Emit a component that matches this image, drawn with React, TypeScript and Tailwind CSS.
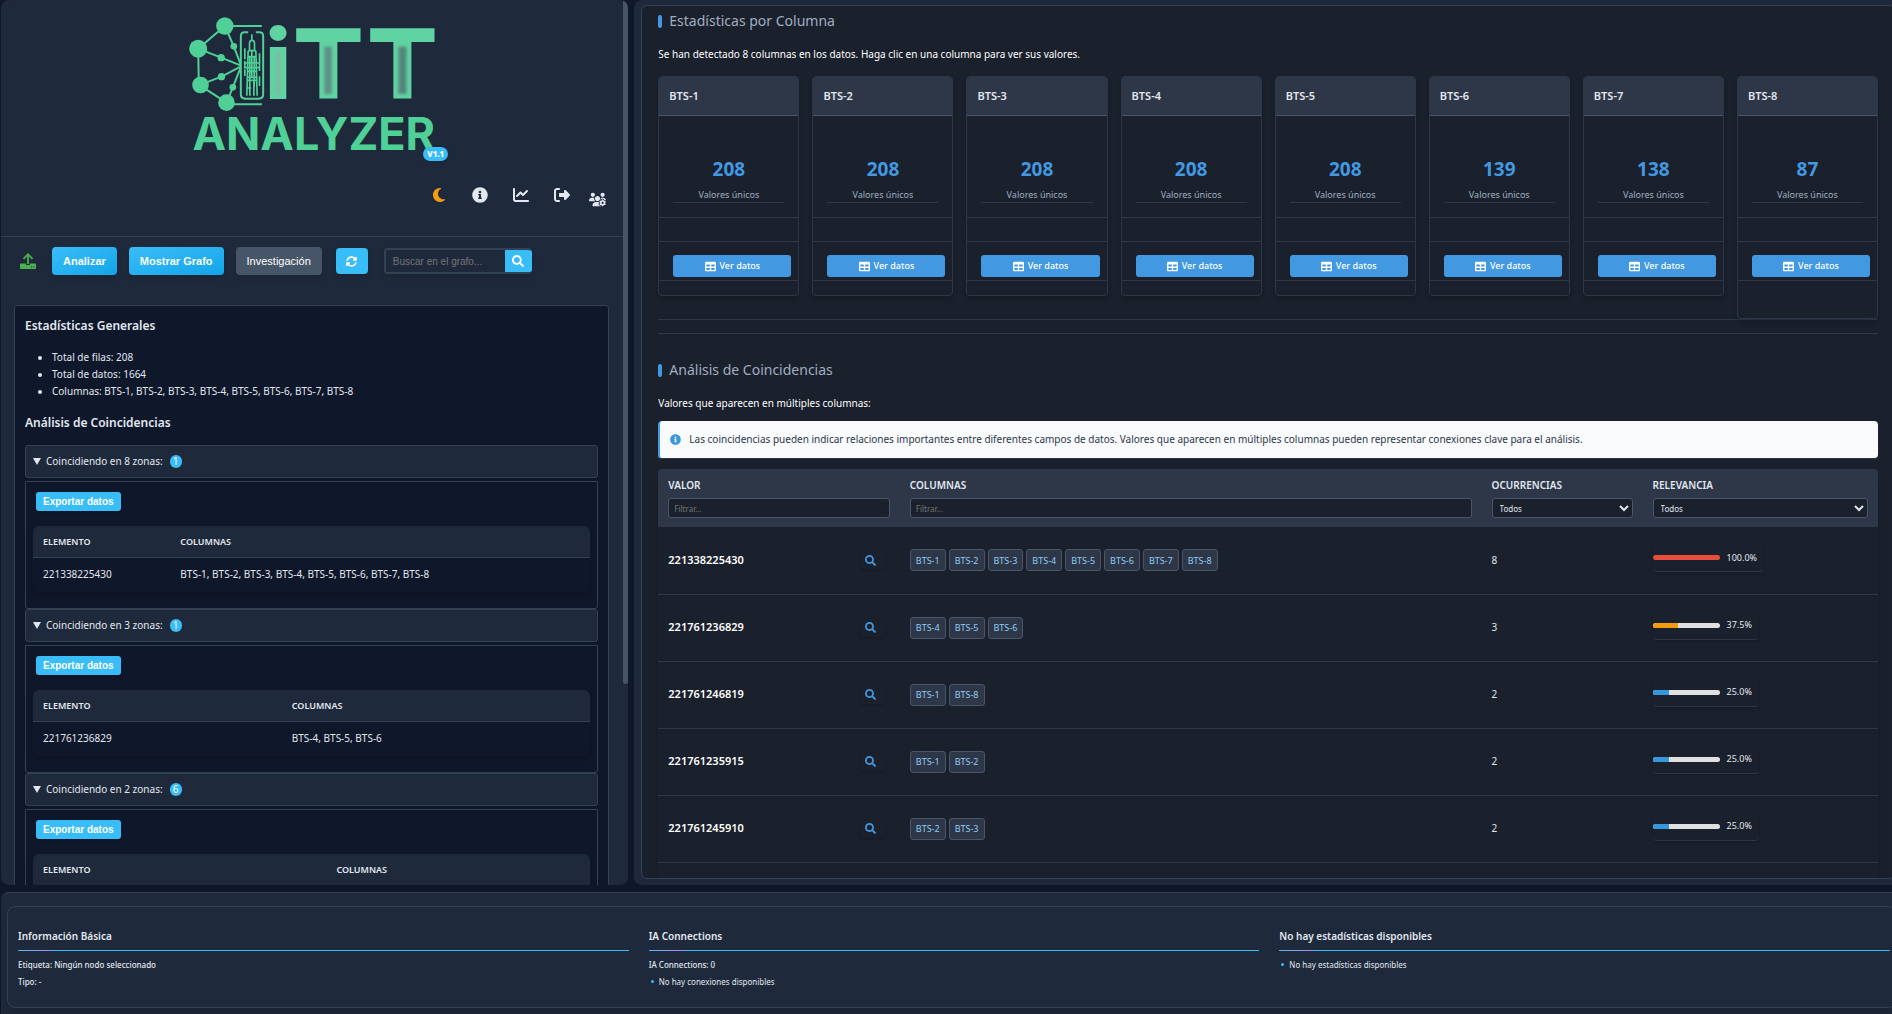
import type { ReactNode } from "react";
import { FaInfoCircle, FaSearch, FaSyncAlt } from "react-icons/fa";
import { FaChartLine, FaMoon, FaRightFromBracket, FaTable, FaUsersGear } from "react-icons/fa6";

const GREEN = "#4fd096";

const columnStats = [
  { name: "BTS-1", unique: 208 },
  { name: "BTS-2", unique: 208 },
  { name: "BTS-3", unique: 208 },
  { name: "BTS-4", unique: 208 },
  { name: "BTS-5", unique: 208 },
  { name: "BTS-6", unique: 139 },
  { name: "BTS-7", unique: 138 },
  { name: "BTS-8", unique: 87 },
];

const zoneGroups = [
  {
    zones: 8,
    count: 1,
    firstCol: "w-[25%]",
    rows: [["221338225430", "BTS-1, BTS-2, BTS-3, BTS-4, BTS-5, BTS-6, BTS-7, BTS-8"]],
  },
  { zones: 3, count: 1, firstCol: "w-[45%]", rows: [["221761236829", "BTS-4, BTS-5, BTS-6"]] },
  {
    zones: 2,
    count: 6,
    firstCol: "w-[53%]",
    rows: [
      ["221761246819", "BTS-1, BTS-8"],
      ["221761235915", "BTS-1, BTS-2"],
      ["221761245910", "BTS-2, BTS-3"],
    ],
  },
];

const matches = [
  {
    value: "221338225430",
    tags: ["BTS-1", "BTS-2", "BTS-3", "BTS-4", "BTS-5", "BTS-6", "BTS-7", "BTS-8"],
    count: 8,
    percent: 100,
    color: "bg-[#e74c3c]",
  },
  { value: "221761236829", tags: ["BTS-4", "BTS-5", "BTS-6"], count: 3, percent: 37.5, color: "bg-[#f39c12]" },
  { value: "221761246819", tags: ["BTS-1", "BTS-8"], count: 2, percent: 25, color: "bg-[#3498db]" },
  { value: "221761235915", tags: ["BTS-1", "BTS-2"], count: 2, percent: 25, color: "bg-[#3498db]" },
  { value: "221761245910", tags: ["BTS-2", "BTS-3"], count: 2, percent: 25, color: "bg-[#3498db]" },
];

function Logo() {
  return (
    <svg viewBox="55 45 755 405" className="h-[135px] w-[252px] overflow-visible" role="img" aria-label="iTT Analyzer">
      <defs>
        <filter id="soft" x="-50%" y="-20%" width="200%" height="140%">
          <feGaussianBlur stdDeviation="4" />
        </filter>
      </defs>
      <g stroke={GREEN} strokeWidth="6" fill="none">
        <path d="M165 78H276M170 313H276M165 78L85 146V146L87 254L170 308M85 146L154 173L212 196M92 254L155 230L212 200M165 78L192 139L212 192M170 308L189 262L212 204" />
        <path d="M235 97H224Q213 97 213 110V283Q213 296 226 296H267Q280 296 280 283V110Q280 97 269 97H258" />
      </g>
      <g fill={GREEN}>
        <circle cx="165" cy="78" r="26" />
        <circle cx="85" cy="146" r="27" />
        <circle cx="92" cy="255" r="25" />
        <circle cx="170" cy="308" r="25" />
        <circle cx="192" cy="139" r="10" />
        <circle cx="154" cy="173" r="11" />
        <circle cx="155" cy="230" r="11" />
        <circle cx="189" cy="262" r="10" />
      </g>
      <g stroke={GREEN} strokeWidth="5" fill="none">
        <path d="M246 103V121M239 150V130Q239 121 246 121Q254 121 254 130V150M235 152H258M235 152L231 287M258 152L262 287M234 170H259M222 189H270M222 203H270M232 214H261M232 232H261M234 241H260M246 152V232M240 170V260M253 170V260M240 244V287M252 244V287M232 264H244M225 145V178M225 183V200M225 208V228M269 160V213M269 229V258" />
      </g>
      <g fill="#5fd3a2" fontWeight="700" textAnchor="middle">
        <text x="325" y="296" fontFamily="Inter, sans-serif" fontSize="288" fontWeight="800">
          i
        </text>
        <text x="476" y="296" fontFamily="DejaVu Sans, sans-serif" fontSize="287">
          T
        </text>
        <text x="698" y="296" fontFamily="DejaVu Sans, sans-serif" fontSize="287">
          T
        </text>
      </g>
      <g filter="url(#soft)">
        <rect x="318" y="152" width="14" height="132" fill="#7fb9a4" />
        <rect x="464" y="140" width="22" height="142" fill="#5f8f84" />
        <rect x="686" y="140" width="24" height="142" fill="#55857b" />
      </g>
      <text x="432" y="449" fill={GREEN} fontFamily="Inter, sans-serif" fontWeight="700" fontSize="135" textAnchor="middle">
        ANALYZER
      </text>
    </svg>
  );
}

function UploadIcon() {
  return (
    <svg viewBox="0 0 16 16" className="size-4" fill="#4caf50" aria-hidden="true">
      <path d="M8 0l5.2 5.2-1.3 1.3L8.900 3.600V11H7.100V3.600l-3 2.900-1.300-1.300z" />
      <path d="M1 10.600h5V12h4v-1.400h5a1 1 0 011 1V15a1 1 0 01-1 1H1a1 1 0 01-1-1v-3.400a1 1 0 011-1z" />
      <circle cx="11.500" cy="13.800" r=".6" fill="#1e293b" />
      <circle cx="13.700" cy="13.800" r=".6" fill="#1e293b" />
    </svg>
  );
}

function IconButton({ label, children }: { label: string; children: ReactNode }) {
  return (
    <button aria-label={label} className="flex w-[41px] justify-center text-base text-[#e2e8f0]">
      {children}
    </button>
  );
}

function ZoneGroup({ group }: { group: (typeof zoneGroups)[number] }) {
  return (
    <details open>
      <summary className="flex h-[33px] cursor-pointer list-none items-center rounded-[3px] border border-[#334155] bg-[#1e293b] px-[7px]">
        <svg viewBox="0 0 8 7" className="mr-[5px] h-[7px] w-2" fill="#e2e8f0" aria-hidden="true">
          <path d="M0 0h8L4 7z" />
        </svg>
        Coincidiendo en {group.zones} zonas:
        <span className="ml-[7px] flex h-[13px] w-3 items-center justify-center rounded-full bg-[#38bdf8] text-white">
          {group.count}
        </span>
      </summary>
      <div className="mt-[3px] rounded-b-[3px] border border-[#334155] px-[7px] pt-2.5 pb-4">
        <button className="ml-[3px] block h-[19px] rounded-[3px] bg-[#38bdf8] px-[7px] font-['Liberation_Sans',sans-serif] text-[10px] font-bold text-white shadow">
          Exportar datos
        </button>
        <table className="mt-[15px] w-full table-fixed overflow-hidden rounded-md text-left shadow-md">
          <thead className="bg-[#1e293b] text-[9px]">
            <tr className="h-[31px] border-b border-[#334155]">
              <th className={`${group.firstCol} pl-2.5 font-semibold`}>ELEMENTO</th>
              <th className="pl-2 font-semibold">COLUMNAS</th>
            </tr>
          </thead>
          <tbody>
            {group.rows.map(([value, columns]) => (
              <tr key={value} className="h-[35px]">
                <td className="pl-2.5">{value}</td>
                <td className="pl-2">{columns}</td>
              </tr>
            ))}
          </tbody>
        </table>
      </div>
    </details>
  );
}

function LeftPanel() {
  return (
    <aside className="relative w-[33%] overflow-hidden rounded-lg bg-[#1e293b] pr-[5px]">
      <header className="flex h-[237px] flex-col border-b border-[#334155] pt-[15px]">
        <div className="flex justify-center pl-1">
          <div className="relative">
            <Logo />
            <span className="absolute -right-2 -bottom-[11px] flex h-3.5 items-center rounded-full bg-[#38bdf8] px-1 text-[8px] font-extrabold text-white shadow">
              V1.1
            </span>
          </div>
        </div>
        <div className="mt-[37px] flex items-start justify-end pr-3">
          <button aria-label="Modo oscuro" className="flex w-[41px] justify-center text-base text-[#f39c12]">
            <FaMoon />
          </button>
          <IconButton label="Información">
            <FaInfoCircle />
          </IconButton>
          <IconButton label="Estadísticas">
            <FaChartLine />
          </IconButton>
          <IconButton label="Salir">
            <FaRightFromBracket />
          </IconButton>
          <button aria-label="Usuarios" className="ml-px flex w-7 justify-center pt-1 text-[17px] text-[#e2e8f0]">
            <FaUsersGear />
          </button>
        </div>
      </header>

      <div className="mt-2.5 flex items-center pl-[19px] font-['Liberation_Sans',sans-serif] text-[11px] font-bold text-white">
        <button aria-label="Cargar archivo">
          <UploadIcon />
        </button>
        <button className="ml-4 h-7 rounded bg-linear-to-br from-[#38bdf8] to-[#0ea5e9] px-[11px] shadow-md">Analizar</button>
        <button className="ml-3 h-7 rounded bg-linear-to-br from-[#38bdf8] to-[#0ea5e9] px-[11px] shadow-md">
          Mostrar Grafo
        </button>
        <button className="ml-3 h-7 rounded bg-[#475569] px-[11px] font-medium shadow-md">Investigación</button>
        <button
          aria-label="Actualizar"
          className="ml-3.5 flex h-[26px] w-8 items-center justify-center rounded bg-[#38bdf8] shadow-md"
        >
          <FaSyncAlt />
        </button>
        <form className="ml-4 flex h-[26px] w-[148px] overflow-hidden rounded border-2 border-r-0 border-[#334155] shadow-md">
          <input
            aria-label="Buscar en el grafo"
            placeholder="Buscar en el grafo..."
            className="min-w-0 flex-1 bg-[#1e293b] pl-[7px] text-[10px] font-normal text-[#e2e8f0] placeholder:text-[#757575]"
          />
          <button type="button" aria-label="Buscar" className="-my-px flex w-[27px] items-center justify-center bg-[#38bdf8] text-xs">
            <FaSearch />
          </button>
        </form>
      </div>

      <section className="mt-[30px] mr-3.5 ml-[13px] rounded-[3px] border border-[#334155] bg-[#0f172a] px-2.5 pt-3 pb-3">
        <h3 className="text-xs leading-4 font-semibold">Estadísticas Generales</h3>
        <ul className="mt-[15px] list-disc pl-[27px] leading-[17px]">
          <li>Total de filas: 208</li>
          <li>Total de datos: 1664</li>
          <li>Columnas: BTS-1, BTS-2, BTS-3, BTS-4, BTS-5, BTS-6, BTS-7, BTS-8</li>
        </ul>
        <h3 className="mt-[15px] mb-3.5 text-xs leading-4 font-semibold">Análisis de Coincidencias</h3>
        {zoneGroups.map((group) => (
          <ZoneGroup key={group.zones} group={group} />
        ))}
      </section>

      <div className="absolute top-0 right-0 h-[684px] w-[5px] rounded-b-full bg-[#475569]" />
    </aside>
  );
}

function SectionTitle({ children }: { children: ReactNode }) {
  return (
    <h2 className="flex items-center gap-[7px] text-sm leading-5 text-[#a0aec0]">
      <span className="h-[13px] w-1 rounded-sm bg-[#4299e1]" />
      {children}
    </h2>
  );
}

function ColumnCard({ name, unique, last }: { name: string; unique: number; last: boolean }) {
  return (
    <article
      className={`overflow-hidden rounded border border-[#2d3748] shadow-md ${last ? "pb-[37px]" : "pb-3.5"}`}
    >
      <h4 className="flex h-[39px] items-center border-b border-[#4a5568] bg-[#2d3748] px-2.5 text-[11px] font-semibold">{name}</h4>
      <div className="border-b border-[#2d3748] px-3.5 pt-10 pb-3.5">
        <div className="border-b border-[#2d3748] text-center">
          <div className="text-[19px] leading-[26px] font-bold text-[#4299e1]">{unique}</div>
          <div className="mt-1.5 text-[9px] leading-[14px] text-[#a0aec0]">Valores únicos</div>
        </div>
      </div>
      <div className="h-6 border-b border-[#2d3748]" />
      <div className="border-b border-[#2d3748] pt-[13px] pr-[7px] pb-[3px] pl-3.5">
        <button className="flex h-[22px] w-full items-center justify-center gap-1 rounded-[3px] bg-[#4299e1] text-[9px] font-medium text-white">
          <FaTable className="text-[11px]" />
          Ver datos
        </button>
      </div>
    </article>
  );
}

const fieldClass = "mt-1.5 block h-5 w-full rounded-[3px] border border-[#4a5568] bg-[#1a202c] text-[8px] font-normal";

function MatchTable() {
  return (
    <div className="mt-2.5 overflow-hidden rounded-t shadow-lg">
      <table className="w-full table-fixed text-left">
        <thead className="bg-[#2d3748] text-[10px] leading-[14px]">
          <tr>
            <th className="w-[19.8%] px-2.5 py-[9px] font-semibold">
              <label htmlFor="f-value">VALOR</label>
              <input id="f-value" placeholder="Filtrar..." className={`${fieldClass} px-[5px] placeholder:text-[#757575]`} />
            </th>
            <th className="w-[47.7%] px-2.5 py-[9px] font-semibold">
              <label htmlFor="f-columns">COLUMNAS</label>
              <input id="f-columns" placeholder="Filtrar..." className={`${fieldClass} px-[5px] placeholder:text-[#757575]`} />
            </th>
            <th className="w-[13.2%] px-2.5 py-[9px] font-semibold">
              <label htmlFor="f-count">OCURRENCIAS</label>
              <select id="f-count" className={`${fieldClass} px-[3px]`}>
                <option>Todos</option>
              </select>
            </th>
            <th className="px-2.5 py-[9px] font-semibold">
              <label htmlFor="f-relevance">RELEVANCIA</label>
              <select id="f-relevance" className={`${fieldClass} px-[3px]`}>
                <option>Todos</option>
              </select>
            </th>
          </tr>
        </thead>
        <tbody>
          {matches.map((m) => (
            <tr key={m.value} className="h-[67px] border-b border-[#2d3748]">
              <td className="px-2.5">
                <div className="flex items-center justify-between pr-[5px]">
                  <span className="text-[11px] font-semibold text-white">{m.value}</span>
                  <button
                    aria-label={`Buscar ${m.value}`}
                    className="flex h-[18px] w-[25px] items-center justify-center rounded-[3px] pr-1 text-[11px] text-[#4299e1] shadow"
                  >
                    <FaSearch />
                  </button>
                </div>
              </td>
              <td className="px-2.5">
                <div className="flex gap-[3px]">
                  {m.tags.map((tag) => (
                    <span
                      key={tag}
                      className="flex h-[22px] items-center rounded-[3px] border border-[#4a5568] bg-[#2d3748] px-[5px] text-[9px] text-[#90cdf4]"
                    >
                      {tag}
                    </span>
                  ))}
                </div>
              </td>
              <td className="px-2.5">{m.count}</td>
              <td className="px-2.5 pb-1">
                <div className="flex h-7 w-fit items-center gap-[7px] rounded border-b border-[#2d3748] pr-[7px] text-[9px] shadow">
                  <div className="h-[5px] w-[67px] overflow-hidden rounded-full bg-[#e0e0e0]">
                    <div className={`h-full ${m.color}`} style={{ width: `${m.percent}%` }} />
                  </div>
                  {m.percent.toFixed(1)}%
                </div>
              </td>
            </tr>
          ))}
        </tbody>
      </table>
      <div className="h-[67px]" />
    </div>
  );
}

function RightPanel() {
  return (
    <main className="flex min-w-0 flex-1 rounded-lg bg-[#1e293b] px-[7px] pt-[5px] pb-1.5">
      <div className="min-w-0 flex-1 overflow-hidden rounded-md border border-[#334155] bg-[#1a202c] px-4 pt-[5px]">
        <SectionTitle>Estadísticas por Columna</SectionTitle>
        <p className="mt-[15px] leading-4 text-white">
          Se han detectado 8 columnas en los datos. Haga clic en una columna para ver sus valores.
        </p>
        <div className="mt-3.5 grid grid-cols-8 items-start gap-[13px] border-b border-[#2d3748]">
          {columnStats.map((c, i) => (
            <ColumnCard key={c.name} name={c.name} unique={c.unique} last={i === columnStats.length - 1} />
          ))}
        </div>
        <hr className="mt-[13px] border-[#2d3748]" />
        <div className="mt-[26px]">
          <SectionTitle>Análisis de Coincidencias</SectionTitle>
        </div>
        <p className="mt-[15px] leading-4 text-white">Valores que aparecen en múltiples columnas:</p>
        <div className="mt-2.5 flex h-[38px] items-center gap-2 rounded border-b border-l-2 border-b-[#2d3748] border-l-[#4299e1] bg-[#f8fafc] pl-2.5 text-[#2d3748]">
          <FaInfoCircle className="text-[11px] text-[#3498db]" />
          Las coincidencias pueden indicar relaciones importantes entre diferentes campos de datos. Valores que aparecen en
          múltiples columnas pueden representar conexiones clave para el análisis.
        </div>
        <MatchTable />
      </div>
    </main>
  );
}

function InfoColumn({ title, children }: { title: string; children: ReactNode }) {
  return (
    <section>
      <h3 className="leading-4 font-semibold">{title}</h3>
      <div className="mt-1.5 mb-[5px] h-px bg-[#38bdf8]">
        <div className="h-px w-[34px] bg-linear-to-r from-[#38bdf8] to-[#a78bfa]" />
      </div>
      <div className="text-[8px] leading-[17px] font-medium">{children}</div>
    </section>
  );
}

function EmptyItem({ children }: { children: ReactNode }) {
  return (
    <ul className="font-normal">
      <li className="flex items-center gap-[5px] pl-0.5">
        <span className="size-[3px] rounded-full bg-[#38bdf8]" />
        {children}
      </li>
    </ul>
  );
}

export default function App() {
  return (
    <div className="h-screen overflow-hidden bg-[#0f172a] font-['Noto_Sans',sans-serif] text-[10px] text-[#e2e8f0]">
      <div className="-mr-2.5 flex h-full flex-col pl-px">
        <div className="mb-[7px] flex min-h-0 flex-1 gap-1.5">
          <LeftPanel />
          <RightPanel />
        </div>
        <footer className="rounded-t-lg border-t border-[#334155] bg-[#1e293b] px-1.5 pt-[13px] pb-1.5">
          <div className="grid grid-cols-3 gap-5 rounded-lg border border-[#334155] pt-[21px] pr-[5px] pb-[17px] pl-2.5 shadow-lg">
            <InfoColumn title="Información Básica">
              <p>Etiqueta: Ningún nodo seleccionado</p>
              <p>Tipo: -</p>
            </InfoColumn>
            <InfoColumn title="IA Connections">
              <p>IA Connections: 0</p>
              <EmptyItem>No hay conexiones disponibles</EmptyItem>
            </InfoColumn>
            <InfoColumn title="No hay estadísticas disponibles">
              <EmptyItem>No hay estadísticas disponibles</EmptyItem>
            </InfoColumn>
          </div>
        </footer>
      </div>
    </div>
  );
}
